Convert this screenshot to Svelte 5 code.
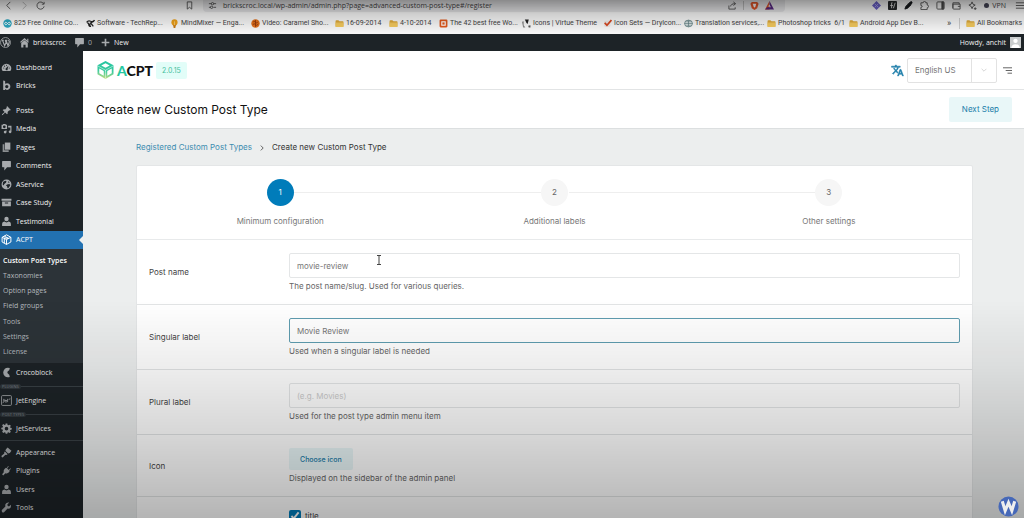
<script lang="ts">
  import { onMount } from 'svelte';

  interface MenuItem {
    icon: string;
    label: string;
  }

  // Browser bookmarks bar
  const bookmarks = [
    { icon: 'infinity', label: '825 Free Online Co...' },
    { icon: 'swirl', label: 'Software - TechRep...' },
    { icon: 'bulb', label: 'MindMixer — Enga...' },
    { icon: 'ball', label: 'Video: Caramel Sho...' },
    { icon: 'folder', label: '16-09-2014' },
    { icon: 'folder', label: '4-10-2014' },
    { icon: 'square', label: 'The 42 best free Wo...' },
    { icon: 'virtue', label: 'Icons | Virtue Theme' },
    { icon: 'check', label: 'Icon Sets — DryIcon...' },
    { icon: 'globe', label: 'Translation services,...' },
    { icon: 'folder', label: 'Photoshop tricks  6/1' },
    { icon: 'folder', label: 'Android App Dev B...' }
  ];

  // Admin menu, split where the separators sit
  const menuTop: MenuItem[] = [
    { icon: 'dashboard', label: 'Dashboard' },
    { icon: 'bricks', label: 'Bricks' }
  ];

  const menuContent: MenuItem[] = [
    { icon: 'pin', label: 'Posts' },
    { icon: 'media', label: 'Media' },
    { icon: 'pages', label: 'Pages' },
    { icon: 'comment', label: 'Comments' },
    { icon: 'world', label: 'AService' },
    { icon: 'archive', label: 'Case Study' },
    { icon: 'user', label: 'Testimonial' },
    { icon: 'cube', label: 'ACPT' }
  ];

  const submenu = ['Custom Post Types', 'Taxonomies', 'Option pages', 'Field groups', 'Tools', 'Settings', 'License'];

  const menuBottom: MenuItem[] = [
    { icon: 'brush', label: 'Appearance' },
    { icon: 'plug', label: 'Plugins' },
    { icon: 'user', label: 'Users' },
    { icon: 'wrench', label: 'Tools' }
  ];

  const steps = ['Minimum configuration', 'Additional labels', 'Other settings'];

  let current = $state(0);
  let postName = $state('movie-review');
  let singular = $state('Movie Review');
  let plural = $state('');
  let supportsTitle = $state(true);
  let singularInput: HTMLInputElement;

  onMount(() => {
    singularInput.focus({ preventScroll: true });
    singularInput.setSelectionRange(singular.length, singular.length);
  });
</script>

{#snippet bookmarkIcon(name: string)}
  <svg class="bm-icon" viewBox="0 0 16 16" aria-hidden="true">
    {#if name === 'folder'}
      <path d="M1 3.5Q1 2 2.500 2H6l2 2h6q1 0 1 1v8q0 1-1 1H2q-1 0-1-1z" fill="#dda93a" />
      <path d="M1 6h14v7q0 1-1 1H2q-1 0-1-1z" fill="#f2c85c" />
    {:else if name === 'infinity'}
      <circle cx="8" cy="8" r="7.500" fill="#2aa3bd" />
      <path d="M8 8c-2-3-5-2.500-5 0s3 3 5 0 5-2.500 5 0-3 3-5 0z" fill="none" stroke="#fff" stroke-width="1.600" />
    {:else if name === 'swirl'}
      <path d="M1 6q3-4 7-2t7-2q-1 3-5 4t-3 6M2 7q3 0 3 3t4 3M9 8l4 5" fill="none" stroke="#222" stroke-width="2.200" />
    {:else if name === 'bulb'}
      <circle cx="8" cy="6" r="5.500" fill="#eda019" />
      <path d="M5.500 10h5l-1 6h-3z" fill="#c67a12" />
      <path d="M8 4v7" stroke="#fbe2a8" />
    {:else if name === 'ball'}
      <circle cx="8" cy="8" r="7.500" fill="#e2701b" />
      <path d="M4 5q2-2 4 1t4-1M3 10q3-3 5 0t5-1M8 2v12" fill="none" stroke="#8a3208" stroke-width="1.400" />
    {:else if name === 'square'}
      <rect x="1" y="1" width="14" height="14" rx="2" fill="#e0591c" />
      <rect x="4" y="4" width="8" height="8" fill="#fff" />
      <path d="M6 6h4v4H6z" fill="#e0591c" />
    {:else if name === 'virtue'}
      <path d="M0 5l3-1v7l3 4H2z" fill="#888" />
      <path d="M5 1h7l-2 8-2-2z" fill="#222" />
      <path d="M11 12l4-1v4h-3z" fill="#555" />
    {:else if name === 'check'}
      <rect x="2" y="3" width="11" height="11" rx="2" fill="#ece7e5" />
      <path d="M3 7l4 4 8-9" fill="none" stroke="#d5451f" stroke-width="3" />
    {:else}
      <ellipse cx="8" cy="8" rx="7" ry="6" fill="#eef4f4" stroke="#5c7c80" stroke-width="1.500" />
      <path d="M1 8h14M4 5h8M4 11h8M8 2v12" stroke="#5c7c80" stroke-width="1.200" />
    {/if}
  </svg>
{/snippet}

{#snippet menuIcon(name: string)}
  <svg class="menu-icon" viewBox="0 0 20 20" fill="currentColor" aria-hidden="true">
    {#if name === 'dashboard'}
      <path d="M10 3a8.500 8.500 0 0 0-7 13.500h14A8.500 8.500 0 0 0 10 3zm0 2a1 1 0 1 1 0 2 1 1 0 0 1 0-2zM5 12a1 1 0 1 1 0-2 1 1 0 0 1 0 2zm1.500-3.500a1 1 0 1 1 0-2 1 1 0 0 1 0 2zM10 15a2 2 0 0 1-1-3.500L13.500 7 12 12.500A2 2 0 0 1 10 15zm5-3a1 1 0 1 1 0-2 1 1 0 0 1 0 2z" />
    {:else if name === 'bricks'}
      <path d="M4 1l3.500 1v5Q9 6 11 6q6 .5 6 6t-6 6q-2.500 0-3.700-1.500V18H4zm6.500 8q-3 .3-3 3t3 3q3-.3 3-3t-3-3z" fill-rule="evenodd" />
    {:else if name === 'pin'}
      <path d="M11 2l7 7-2 1-1-.5-3 3q1 3-1 4.500L7.500 13.500 3 18l-1.500.5L2 17l4.500-4.500L3 9q2-2 4.500-1l3-3L10 4z" />
    {:else if name === 'media'}
      <path d="M1 3h2l1-1h4l1 1h2v8H1zm5 1.500a2.500 2.500 0 1 0 0 5 2.500 2.500 0 0 0 0-5z" fill-rule="evenodd" />
      <path d="M13 5h6v11a2.500 2.500 0 1 1-2-2.500V8h-4zM10 13v4a2.500 2.500 0 1 1-2-3z" />
    {:else if name === 'pages'}
      <path d="M7 1h10v13H7z" />
      <path d="M3 4h3v11h8v3H3z" opacity=".8" />
    {:else if name === 'comment'}
      <path d="M3 2h14q1 0 1 1v9q0 1-1 1h-6l-5 6v-6H3q-1 0-1-1V3q0-1 1-1z" />
    {:else if name === 'world'}
      <path d="M10 1a9 9 0 1 0 0 18 9 9 0 0 0 0-18zM4 5l4-2 2 1-1 3-3 2-1 3-2-2zm7 5l4-1 2 2-3 5-2 1-1-4-2-1zm2-6l3 2-3 1z" fill-rule="evenodd" />
    {:else if name === 'archive'}
      <path d="M1 3h18v4H1zM2 8h16v9H2zm5 2v2h6v-2z" fill-rule="evenodd" />
    {:else if name === 'user'}
      <circle cx="10" cy="5.500" r="4" />
      <path d="M2 18v-4q0-3 4-4l4 2 4-2q4 1 4 4v4z" />
    {:else if name === 'cube'}
      <path d="M10 1.500L18 6v8.500L10 19l-8-4.500V6zM2 6l8 4 8-4M10 10v9M6 4l8 4M6 8v8.500M14 8l-8-1" fill="none" stroke="currentColor" stroke-width="1.800" />
    {:else if name === 'croco'}
      <path d="M16 2q-5-2-9 1-6 7 0 14 4 3 9 1l-1-4q-7-4 0-8z" />
    {:else if name === 'jet'}
      <rect x="1" y="1" width="18" height="18" rx="2" fill="none" stroke="currentColor" stroke-width="1.500" />
      <path d="M5 7v5q0 2-2 2M7 10h4M7 8v4q2 2 4 0M12 7v6M14 8l3-1" fill="none" stroke="currentColor" stroke-width="1.500" />
    {:else if name === 'gear'}
      <path d="M8.500 1h3l.5 2.500 1.500.7L15.700 3 18 5l-1.500 2.300.5 1.400 2.500.3v3l-2.500.5-.7 1.500L18 16l-2.200 2-2.300-1.400-1.500.6-.5 2.300h-3L8 17.200l-1.500-.6L4.300 18 2 15.800 3.500 13.500 3 12 .5 11.500v-3L3 8l.6-1.500L2 4.300 4.200 2l2.300 1.500L8 3zM10 7a3 3 0 1 0 0 6.500A3 3 0 0 0 10 7z" fill-rule="evenodd" />
    {:else if name === 'brush'}
      <path d="M12 1l7 6-3 4-3 1-5-5 1-3zM7 8l5 5q-2 2-4 1l-5 5q-3 0-2-3l5-4q-1-2 1-4z" />
    {:else if name === 'plug'}
      <path d="M13 2l1 1-3 3 3 3 3-3 1 1-3 3 1 1q-3 6-8 4l-4 4-2-2 3-4Q4 8 9 5l1 1z" />
    {:else if name === 'wrench'}
      <path d="M18 5l-3.500 3-2.500-1-.5-2.500L15 1q-5-1-7 3 -.5 2 0 4L2 14q-1.500 2 0 4t4 0l6-6q7 1 6-7z" />
    {/if}
  </svg>
{/snippet}

{#snippet menuLink(item: MenuItem, active = false)}
  <a class="menu-link" class:active href="#{item.label}">
    {@render menuIcon(item.icon)}
    <span>{item.label}</span>
  </a>
{/snippet}

<div class="window">
  <header class="browser">
    <div class="toolbar">
      <div class="nav">
        <button aria-label="Back"><svg viewBox="0 0 10 10"><path d="M7 1L3 5l4 4" /></svg></button>
        <button class="dim" aria-label="Forward"><svg viewBox="0 0 10 10"><path d="M3 1l4 4-4 4" /></svg></button>
        <button aria-label="Reload"><svg viewBox="0 0 10 10"><path d="M8.500 3A4 4 0 1 0 9 6M9 1v2.500H6.500" /></svg></button>
      </div>
      <button aria-label="Bookmark this page"><svg viewBox="0 0 10 10"><path d="M2.500 1h5v8L5 7 2.500 9z" /></svg></button>
      <div class="address">
        <svg viewBox="0 0 10 10" aria-hidden="true"><path d="M1 3h3M6 3h3M1 7h2M6 7h3" /><circle cx="5" cy="3" r="1.300" /><circle cx="4" cy="7" r="1.300" /></svg>
        <span class="url">brickscroc.local/wp-admin/admin.php?page=advanced-custom-post-type#/register</span>
        <svg viewBox="0 0 10 10" aria-hidden="true"><path d="M1 5v4h7V7M3 6q0-3 5-3M6 1l2.500 2L6 5" /></svg>
        <i class="divider"></i>
        <svg viewBox="0 0 10 10" aria-hidden="true"><path d="M2 1h6l1.500 2L8 8 5 10 2 8 .5 3z" fill="#e4572a" stroke="none" /><path d="M3 3h4L6 6 5 7.500 4 6z" fill="#fff" stroke="none" /></svg>
        <svg viewBox="0 0 10 10" aria-hidden="true"><path d="M5 0L0 9.500h5V6H3.500L5 3.500z" fill="#e4572a" stroke="none" /><path d="M5 0l5 9.500H0L2.500 7h4L5 4z" fill="#5b2a86" stroke="none" /></svg>
      </div>
      <div class="extensions">
        <svg viewBox="0 0 10 10" aria-hidden="true"><path d="M5 0l5 5-5 5-5-5z" fill="#6b62c9" stroke="none" /><path d="M3 3l4 4M7 3L3 7" stroke="#a9a0ee" /></svg>
        <svg viewBox="0 0 10 10" aria-hidden="true"><rect width="10" height="10" rx="1" fill="#26282a" stroke="none" /><path d="M5 2H4v6M2.500 5h3M8 2L6 8" stroke="#ddd" /></svg>
        <svg viewBox="0 0 10 10" aria-hidden="true"><path d="M1 9l1-3 3-3 2 2-3 3zM5 3l2-2q2-1 2 1L7 5z" fill="#16191c" stroke="#16191c" /></svg>
        <svg viewBox="0 0 10 10" aria-hidden="true"><path d="M1 2h2.500q0-1.500 1.500-1.500T6.500 2H8v2.500q1.500 0 1.500 1.500T8 7.500V9.500H1V7q1.500 0 1.500-1T1 5z" /></svg>
        <svg viewBox="0 0 10 10" aria-hidden="true"><rect x="1" y="1" width="8" height="8" rx="1" /><path d="M6.500 1h2v8h-2z" fill="#444" /></svg>
        <svg viewBox="0 0 10 10" aria-hidden="true"><path d="M1 8V2h7v1.500M1 3.500h8V9H2q-1 0-1-1zM6.500 6H9" /></svg>
        <svg viewBox="0 0 10 10" aria-hidden="true"><path d="M4.500 1l1 2.500L8 4.500 5.500 6l-1 2.500-1-2.500L1 4.500l2.500-1zM8 7v3M6.500 8.500h3" /></svg>
        <span class="vpn"><i></i>VPN</span>
        <svg viewBox="0 0 10 10" aria-hidden="true"><path d="M1 2h9M1 5h9M1 8h9" /></svg>
      </div>
    </div>
    <nav class="bookmarks" aria-label="Bookmarks">
      {#each bookmarks as bookmark}
        <a href="#bookmark">{@render bookmarkIcon(bookmark.icon)}{bookmark.label}</a>
      {/each}
      <span class="more">»</span>
      <a class="all" href="#all">{@render bookmarkIcon('folder')}All Bookmarks</a>
    </nav>
  </header>

  <div class="adminbar">
    <svg viewBox="0 0 20 20" aria-hidden="true">
      <circle cx="10" cy="10" r="9" fill="none" stroke="#a7aaad" stroke-width="1.500" />
      <path d="M3 6h4M4.500 6l4 10 2.500-6-1.500-4M9 6h4.500M11 6l3.500 10 2.500-7q0-2-2-3" fill="none" stroke="#a7aaad" stroke-width="2" />
    </svg>
    <a class="site" href="#site">
      <svg viewBox="0 0 20 20" aria-hidden="true"><path d="M10 2l8 7-1.500 1.500L10 5l-6.500 5.500L2 9zM15 3h2v5l-2-2zM4 11l6-5 6 5v8h-4v-5H8v5H4z" fill="#a7aaad" /></svg>
      <span>brickscroc</span>
    </a>
    <a class="count" href="#comments">
      {@render menuIcon('comment')}
      <span>0</span>
    </a>
    <a class="new" href="#new">
      <svg viewBox="0 0 20 20" aria-hidden="true"><path d="M10 3v14M3 10h14" stroke="#a7aaad" stroke-width="3" /></svg>
      <span>New</span>
    </a>
    <span class="howdy">Howdy, anchit</span>
    <svg viewBox="0 0 20 20" aria-hidden="true">
      <rect width="20" height="20" fill="#c9cccd" />
      <circle cx="10" cy="7" r="4" fill="#fff" />
      <path d="M2 20q1-7 8-7t8 7z" fill="#fff" />
    </svg>
  </div>

  <div class="body">
    <aside class="sidebar">
      <nav class="group top">
        {#each menuTop as item}{@render menuLink(item)}{/each}
      </nav>
      <nav class="group content">
        {#each menuContent as item}{@render menuLink(item, item.label === 'ACPT')}{/each}
      </nav>
      <ul class="submenu">
        {#each submenu as label, i}
          <li><a class:selected={i === 0} href="#{label}">{label}</a></li>
        {/each}
      </ul>
      <nav class="group single">{@render menuLink({ icon: 'croco', label: 'Crocoblock' })}</nav>
      <div class="section"><span>PLUGINS</span></div>
      <nav class="group single">{@render menuLink({ icon: 'jet', label: 'JetEngine' })}</nav>
      <div class="section"><span>POST TYPES</span></div>
      <nav class="group single">{@render menuLink({ icon: 'gear', label: 'JetServices' })}</nav>
      <hr />
      <nav class="group bottom">
        {#each menuBottom as item}{@render menuLink(item)}{/each}
      </nav>
    </aside>

    <main>
      <div class="brandbar">
        <svg class="logo" viewBox="0 0 36 40" aria-hidden="true">
          <defs>
            <linearGradient id="mint" gradientUnits="userSpaceOnUse" x1="18" y1="0" x2="14" y2="40">
              <stop offset="0" stop-color="#1fc3a0" />
              <stop offset=".55" stop-color="#3ccb9f" />
              <stop offset="1" stop-color="#d8e07e" />
            </linearGradient>
          </defs>
          <path d="M18 2L34 10.500v18L18 38 2 28.500v-18z" fill="url(#mint)" />
          <path d="M18 6.500l8.500 4.500-8.500 4.500L9.500 11z" fill="#fff" />
          <path d="M5.500 17l9 5v9.500l-9-5z" fill="#fff" />
          <path d="M30.500 17l-9 5v9.500l9-5z" fill="#fff" />
          <path d="M2 11.500l16 9 16-9M18 20v17" fill="none" stroke="#fff" stroke-width="1" />
        </svg>
        <strong class="brand"><span>A</span>CPT</strong>
        <span class="version">2.0.15</span>
        <svg class="translate" viewBox="0 0 24 24" aria-hidden="true"><path d="M12.870 15.070l-2.540-2.510.03-.03A17.520 17.520 0 0 0 14.070 6H17V4h-7V2H8v2H1v2h11.170C11.500 7.920 10.440 9.750 9 11.350 8.070 10.320 7.300 9.190 6.690 8h-2c.73 1.630 1.730 3.170 2.980 4.560l-5.090 5.020L4 19l5-5 3.110 3.110zM18.500 10h-2L12 22h2l1.120-3h4.750L21 22h2zm-2.620 7l1.620-4.330L19.120 17z" fill="#1b7da9" stroke="#1b7da9" /></svg>
        <button class="language">
          <span>English US</span>
          <svg viewBox="0 0 10 10" aria-hidden="true"><path d="M1 3l4 4 4-4" fill="none" stroke="#bbb" /></svg>
        </button>
        <button class="toggle" aria-label="Toggle menu">
          <svg viewBox="0 0 10 10"><path d="M0 2h10M3 5h7M5 8h5" stroke="#555" stroke-width="1" /></svg>
        </button>
      </div>

      <div class="titlebar">
        <h1>Create new Custom Post Type</h1>
        <button class="soft next" onclick={() => (current = Math.min(current + 1, 2))}>Next Step</button>
      </div>

      <div class="page">
        <nav class="crumbs" aria-label="Breadcrumb">
          <a href="#list">Registered Custom Post Types</a>
          <svg viewBox="0 0 10 10" aria-hidden="true"><path d="M3 1l4 4-4 4" fill="none" stroke="#555" stroke-width="1.500" /></svg>
          <span>Create new Custom Post Type</span>
        </nav>

        <form class="card">
          <ol class="steps">
            {#each steps as step, i}
              <li>
                <span class="number" class:current={i === current}>{i + 1}</span>
                <span>{step}</span>
              </li>
            {/each}
          </ol>

          <div class="row">
            <label for="post-name">Post name</label>
            <div class="field">
              <input id="post-name" type="text" bind:value={postName} />
              <p>The post name/slug. Used for various queries.</p>
            </div>
          </div>
          <div class="row">
            <label for="singular">Singular label</label>
            <div class="field">
              <input id="singular" type="text" bind:value={singular} bind:this={singularInput} />
              <p>Used when a singular label is needed</p>
            </div>
          </div>
          <div class="row">
            <label for="plural">Plural label</label>
            <div class="field">
              <input id="plural" type="text" placeholder="(e.g. Movies)" bind:value={plural} />
              <p>Used for the post type admin menu item</p>
            </div>
          </div>
          <div class="row">
            <label for="icon">Icon</label>
            <div class="field">
              <button id="icon" class="soft choose" type="button">Choose icon</button>
              <p>Displayed on the sidebar of the admin panel</p>
            </div>
          </div>
          <div class="row">
            <span></span>
            <label class="check"><input type="checkbox" bind:checked={supportsTitle} />title</label>
          </div>
        </form>
      </div>
    </main>
  </div>

  <!-- Player chrome over the page: shading, pointer and watermark -->
  <div class="shade"></div>
  <svg class="pointer" viewBox="0 0 6 10" aria-hidden="true"><path d="M1 .5h4M1 9.500h4M3 .5v9" fill="none" stroke="#444" /></svg>
  <svg class="watermark" viewBox="0 0 22 22" aria-hidden="true">
    <circle cx="11" cy="11" r="10.500" fill="#4668b8" />
    <path d="M4.500 5.500l3 10L11 7l3.500 8.500 3-10" fill="none" stroke="#eee" stroke-width="3.200" />
  </svg>
</div>

<style>
  :global(body) {
    margin: 0;
  }

  .window {
    position: relative;
    height: 100vh;
    overflow: hidden;
    display: flex;
    flex-direction: column;
    font-family: Inter, sans-serif;
    font-size: 8px;
    line-height: 11px;
    color: #555;
  }

  a {
    color: inherit;
    text-decoration: none;
  }

  button {
    font: inherit;
    color: inherit;
    border: 0;
    padding: 0;
    background: none;
    cursor: pointer;
  }

  /* Browser */
  .browser {
    flex: none;
    background: #f7f7f7;
    font-family: 'Open Sans', sans-serif;
    font-size: 7px;
    color: #444;
  }

  .toolbar {
    height: 13px;
    display: flex;
    align-items: center;
    padding: 0 0 2px 4px;
    box-sizing: border-box;
  }

  .toolbar svg {
    display: block;
    width: 9px;
    height: 9px;
    fill: none;
    stroke: #555;
  }

  .nav {
    width: 181px;
    display: flex;
    gap: 7px;
  }

  .dim {
    opacity: 0.4;
  }

  .address {
    flex: 1;
    max-width: 566px;
    height: 13px;
    margin-left: 9px;
    padding: 0 11px 0 5px;
    display: flex;
    align-items: center;
    gap: 6px;
    background: #e6e6e8;
    border-radius: 0 0 4px 4px;
  }

  .url {
    flex: 1;
    white-space: nowrap;
  }

  .divider {
    width: 1px;
    height: 9px;
    background: #bbb;
  }

  .extensions {
    margin-left: auto;
    display: flex;
    align-items: center;
    gap: 7px;
  }

  .vpn {
    display: flex;
    align-items: center;
    gap: 3px;
    padding-right: 2px;
  }

  .vpn i {
    width: 5px;
    height: 5px;
    border-radius: 50%;
    background: #445;
  }

  .bookmarks {
    height: 21px;
    display: grid;
    grid-template-columns: 83fr 84fr 81fr 84fr 54fr 50fr 83fr 81fr 81fr 83fr 82fr 98fr 12fr 65fr;
    align-items: center;
    padding-left: 3px;
    font-family: Roboto, sans-serif;
    white-space: nowrap;
  }

  .bookmarks a {
    display: flex;
    align-items: center;
    gap: 2px;
    min-width: 0;
    white-space: pre;
  }

  .bookmarks .all {
    border-left: 1px solid #ccc;
    padding-left: 6px;
  }

  .more {
    font-size: 9px;
  }

  .bm-icon {
    flex: none;
    width: 9px;
    height: 9px;
  }

  /* Admin bar */
  .adminbar {
    flex: none;
    height: 17px;
    display: flex;
    align-items: center;
    padding-right: 3px;
    background: #1d2327;
    font-family: 'Open Sans', sans-serif;
    font-size: 7px;
    font-weight: 500;
    color: #f0f0f1;
  }

  .adminbar svg {
    display: block;
    width: 11px;
    height: 11px;
  }

  .adminbar a {
    display: flex;
    align-items: center;
    gap: 3px;
    margin-left: 8px;
  }

  .adminbar .count {
    color: #a7aaad;
  }

  .howdy {
    margin-left: auto;
    padding-right: 4px;
  }

  .body {
    flex: 1;
    min-height: 0;
    display: flex;
  }

  /* Sidebar */
  .sidebar {
    flex: none;
    width: 83px;
    padding-top: 7px;
    box-sizing: border-box;
    background: #1d2327;
    font-family: 'Open Sans', sans-serif;
    font-size: 7px;
    color: #f0f0f1;
  }

  .group {
    display: flex;
    flex-direction: column;
  }

  .top {
    height: 37px;
  }

  .content {
    height: 148px;
    margin-top: 6px;
  }

  .single {
    height: 18px;
  }

  .bottom {
    height: 74px;
  }

  .menu-link {
    flex: 1;
    display: flex;
    align-items: center;
    gap: 4px;
    padding-left: 1px;
    font-weight: 500;
  }

  .menu-icon {
    flex: none;
    width: 11px;
    height: 11px;
    color: #a7aaad;
  }

  .active {
    background: #2271b1;
    color: #fff;
    position: relative;
  }

  .active .menu-icon {
    color: #fff;
  }

  .active::after {
    content: '';
    position: absolute;
    right: 0;
    border: 4px solid transparent;
    border-right-color: #eceeee;
  }

  .submenu {
    height: 114px;
    box-sizing: border-box;
    margin: 0;
    padding: 4px 3px;
    display: flex;
    flex-direction: column;
    justify-content: space-around;
    list-style: none;
    background: #2c3338;
    color: #b4b9be;
    white-space: nowrap;
  }

  .selected {
    color: #fff;
    font-weight: 600;
  }

  .section {
    height: 10px;
    display: flex;
    align-items: center;
    font-size: 4px;
    line-height: 5px;
    color: #7d848a;
  }

  .section span {
    padding: 0 2px;
    border-radius: 3px;
    background: #30373c;
  }

  .section::after {
    content: '';
    flex: 1;
    border-top: 1px solid #394045;
  }

  hr {
    margin: 3px 0 2px;
    border: 0;
    border-top: 1px solid #394045;
  }

  /* Page */
  main {
    flex: 1;
    min-width: 0;
    background: #eceeee;
  }

  .brandbar,
  .titlebar {
    display: flex;
    align-items: center;
    height: 38px;
    padding: 0 12px 0 13px;
    background: #fff;
    border-bottom: 1px solid #e2e4e5;
  }

  .logo {
    width: 19px;
    height: 20px;
  }

  .brand {
    margin-left: 2px;
    font-family: Lato, sans-serif;
    font-size: 14px;
    font-weight: 900;
    color: #111;
  }

  .brand span {
    color: #25c7a0;
  }

  .version {
    margin-left: 3px;
    padding: 3px 6px;
    border-radius: 2px;
    background: #e2fdf8;
    color: #45bf9d;
    font-size: 7px;
  }

  .translate {
    width: 13px;
    height: 13px;
    margin-left: auto;
  }

  .language {
    width: 90px;
    height: 25px;
    margin-left: 3px;
    box-sizing: border-box;
    display: flex;
    align-items: center;
    border: 1px solid #e2e2e2;
    border-radius: 2px;
    color: #777;
  }

  .language span {
    flex: 1;
    line-height: 23px;
    padding-left: 7px;
    text-align: left;
    border-right: 1px solid #e2e2e2;
  }

  .language svg {
    width: 6px;
    height: 6px;
    margin: 0 9px;
  }

  .toggle {
    margin-left: 6px;
  }

  .toggle svg {
    display: block;
    width: 9px;
    height: 9px;
  }

  .titlebar {
    border-color: #dcdfe0;
  }

  h1 {
    margin: 0;
    font-size: 12px;
    font-weight: 400;
    color: #111;
  }

  .soft {
    height: 22px;
    padding: 0 11px;
    border-radius: 2px;
    background: #e9f7f8;
    color: #1b7da9;
  }

  .next {
    height: 25px;
    margin-left: auto;
    padding: 0 13px;
  }

  .choose {
    display: block;
    font-size: 7px;
    font-weight: 500;
  }

  .page {
    padding: 13px 51px 0 53px;
  }

  .crumbs {
    display: flex;
    align-items: center;
    gap: 7px;
    color: #333;
  }

  .crumbs a {
    color: #3c8db0;
  }

  .crumbs svg {
    width: 6px;
    height: 6px;
  }

  .card {
    margin-top: 12px;
    background: #fff;
    border: 1px solid #e4e6e7;
    border-radius: 2px;
  }

  .steps {
    display: flex;
    margin: 0;
    padding: 13px 6px 12px;
    list-style: none;
    color: #777;
    border-bottom: 1px solid #e8eaeb;
  }

  .steps li {
    position: relative;
    flex: 1;
    display: flex;
    flex-direction: column;
    align-items: center;
    gap: 10px;
  }

  .steps li + li::before {
    content: '';
    position: absolute;
    top: 13px;
    left: calc(-50% + 14px);
    right: calc(50% + 14px);
    border-top: 1px solid #eee;
  }

  .number {
    width: 27px;
    height: 27px;
    border-radius: 50%;
    background: #f6f6f6;
    line-height: 27px;
    text-align: center;
    color: #666;
  }

  .number.current {
    background: #007cba;
    color: #fff;
  }

  .row {
    display: grid;
    grid-template-columns: 140px 1fr;
    align-items: center;
    padding: 13px 12px 12px;
    border-bottom: 1px solid #e2e4e5;
  }

  .row > label {
    color: #444;
  }

  .field input {
    display: block;
    width: 100%;
    height: 25px;
    box-sizing: border-box;
    padding: 0 7px;
    border: 1px solid #e4e6e7;
    border-radius: 2px;
    background: #fff;
    font: inherit;
    color: #777;
    outline: none;
  }

  .field input::placeholder {
    color: #ccc;
  }

  .field input:focus {
    border-color: #5f9db0;
  }

  .field p {
    margin: 3px 0 0;
    color: #666;
  }

  .check {
    display: flex;
    align-items: center;
    gap: 4px;
  }

  .check input {
    width: 12px;
    height: 12px;
    margin: 0;
    accent-color: #007cba;
  }

  /* Overlays */
  .shade {
    position: absolute;
    inset: 0;
    pointer-events: none;
    background:
      linear-gradient(rgb(0 0 0 / 40%), rgb(0 0 0 / 16%) 14px, transparent 34px),
      linear-gradient(transparent 58%, rgb(0 0 0 / 7%) 71%, rgb(0 0 0 / 16%) 84%, rgb(0 0 0 / 29%));
  }

  .pointer {
    position: absolute;
    left: 376px;
    top: 255px;
    width: 6px;
    height: 10px;
  }

  .watermark {
    position: absolute;
    right: 5px;
    bottom: 1px;
    width: 21px;
    height: 21px;
  }
</style>
